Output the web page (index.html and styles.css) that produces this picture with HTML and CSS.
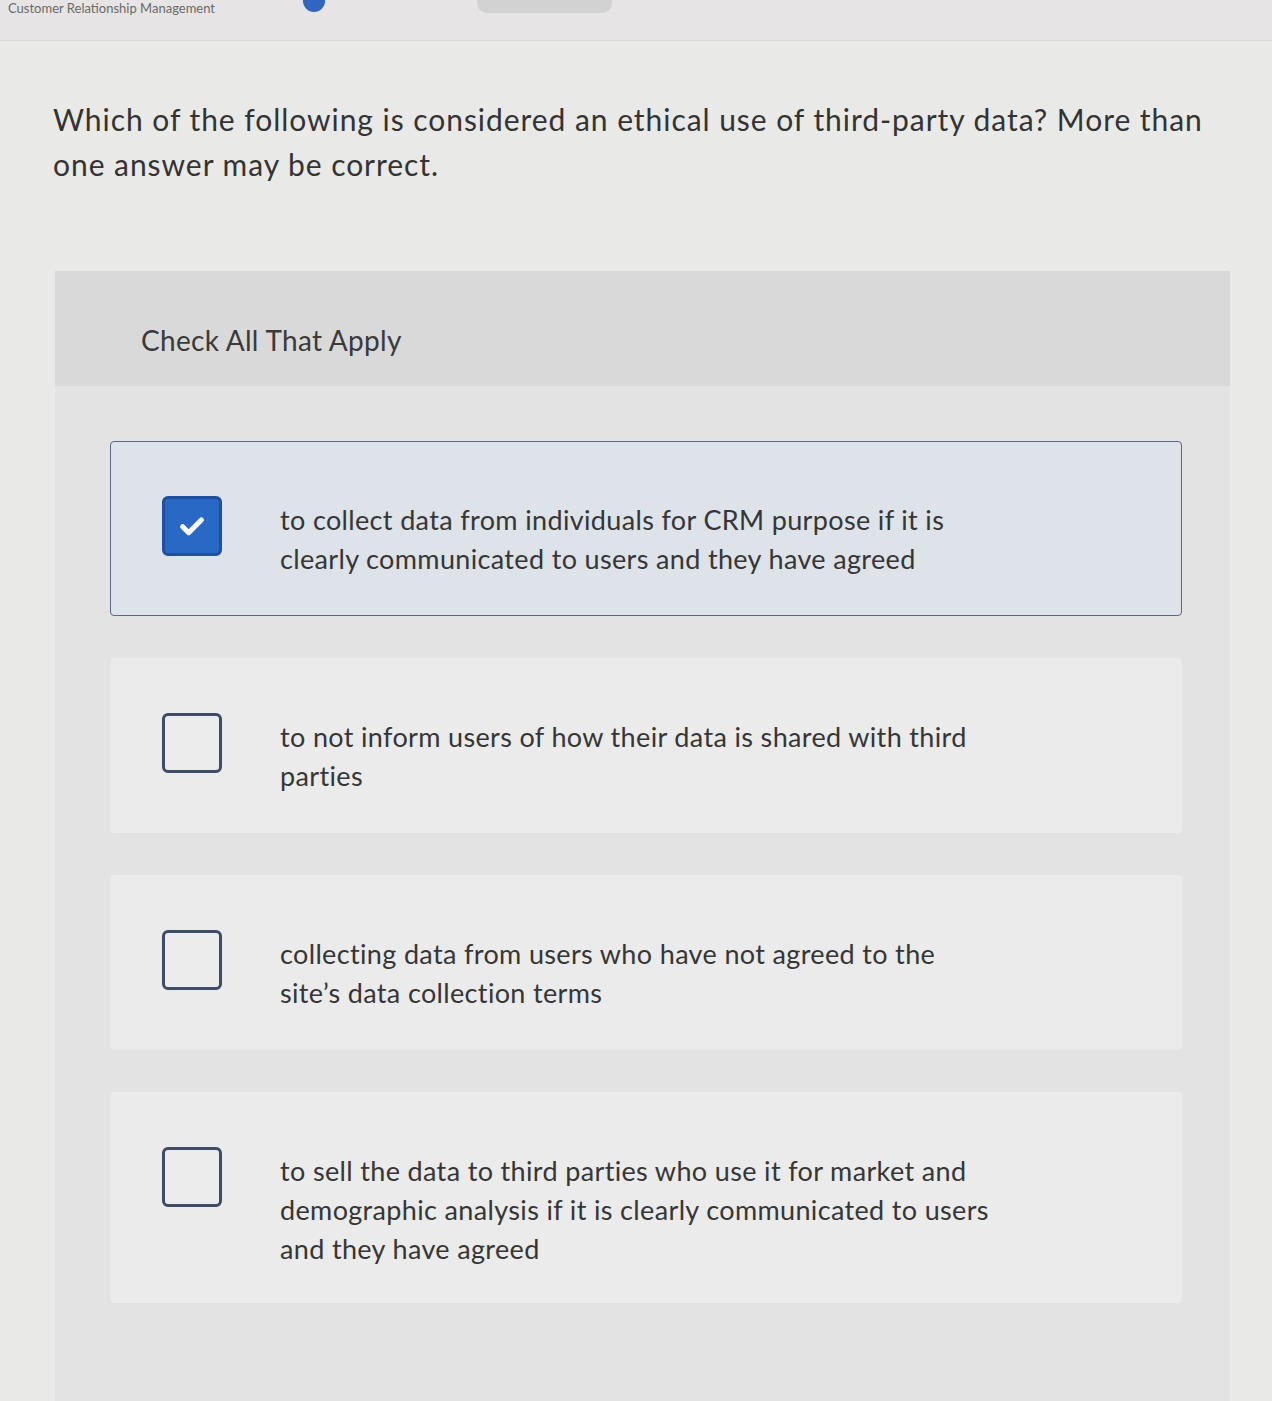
FILE: index.html
```html
<!DOCTYPE html>
<html lang="en">
<head>
<meta charset="utf-8">
<title>Check All That Apply</title>
<link rel="stylesheet" href="styles.css">
</head>
<body>
<header class="topbar">
  <div class="topbar-title">Customer Relationship Management</div>
  <span class="topbar-icon"></span>
  <span class="topbar-button"></span>
</header>
<main class="content">
  <p class="question">Which of the following is considered an ethical use of third-party data? More than one answer may be correct.</p>
  <section class="panel">
    <div class="panel-head">Check All That Apply</div>
    <div class="panel-body">
      <label class="option selected">
        <span class="box checked">
          <svg viewBox="0 0 24 24" width="32" height="32"><path d="M5 12.5l4.5 4.5L19 7.5" fill="none" stroke="#fff" stroke-width="3.8" stroke-linecap="round" stroke-linejoin="round"/></svg>
        </span>
        <span class="option-text">to collect data from individuals for CRM purpose if it is<br>clearly communicated to users and they have agreed</span>
      </label>
      <label class="option">
        <span class="box"></span>
        <span class="option-text">to not inform users of how their data is shared with third<br>parties</span>
      </label>
      <label class="option">
        <span class="box"></span>
        <span class="option-text">collecting data from users who have not agreed to the<br>site’s data collection terms</span>
      </label>
      <label class="option tall">
        <span class="box"></span>
        <span class="option-text">to sell the data to third parties who use it for market and<br>demographic analysis if it is clearly communicated to users<br>and they have agreed</span>
      </label>
    </div>
  </section>
</main>
</body>
</html>
```

FILE: styles.css
```css
html, body {
  margin: 0;
  padding: 0;
}
body {
  background: #e9e9e8;
  font-family: Lato, "Liberation Sans", sans-serif;
  color: #333;
  height: 1401px;
  overflow: hidden;
}
.topbar {
  height: 40px;
  border-bottom: 1px solid #d8d8d8;
  display: flex;
  align-items: flex-start;
  background: #e6e4e4;
}
.topbar-title {
  margin: 1px 0 0 8px;
  font-size: 13px;
  line-height: 14px;
  color: #6a6a6a;
  white-space: nowrap;
}
.topbar-icon {
  width: 22px;
  height: 12px;
  border-radius: 0 0 11px 11px;
  background: #2e66c0;
  margin-left: 88px;
}
.topbar-button {
  width: 135px;
  height: 13px;
  border-radius: 0 0 10px 10px;
  background: #d2d2d2;
  margin-left: 152px;
}
.content {
  padding: 0 30px 0 53px;
}
.question {
  margin: 56px 0 0;
  font-size: 30px;
  letter-spacing: 0.95px;
  line-height: 45px;
  color: #333;
  max-width: 1165px;
}
.panel {
  margin: 84px 0 0 2px;
  width: 1175px;
  background: #e3e3e3;
  height: 1200px;
}
.panel-head {
  height: 115px;
  box-sizing: border-box;
  background: #d9d9d9;
  display: flex;
  align-items: center;
  padding: 22px 0 0 86px;
  font-size: 28px;
  letter-spacing: 0.3px;
  color: #3a3a3a;
}
.panel-body {
  padding: 55px 48px 0 55px;
  display: flex;
  flex-direction: column;
  gap: 42px;
}
.option {
  display: flex;
  align-items: flex-start;
  background: #ebebeb;
  padding: 54px 20px 37px 51px;
  border: 1.5px solid transparent;
  border-radius: 4px;
}
.option.selected {
  background: #dde3e8;
  border-color: #5a6986;
}
.option.tall {
  padding-bottom: 34px;
}
.box {
  flex: none;
  width: 60px;
  height: 60px;
  box-sizing: border-box;
  border: 3px solid #3e4c66;
  border-radius: 6px;
  background: #ececec;
  display: flex;
  align-items: center;
  justify-content: center;
}
.box.checked {
  background: #2a68c6;
  border-color: #1f4f9e;
}
.option-text {
  margin: 4px 0 0 58px;
  font-size: 27px;
  letter-spacing: 0.35px;
  line-height: 39px;
  color: #363636;
}
```
